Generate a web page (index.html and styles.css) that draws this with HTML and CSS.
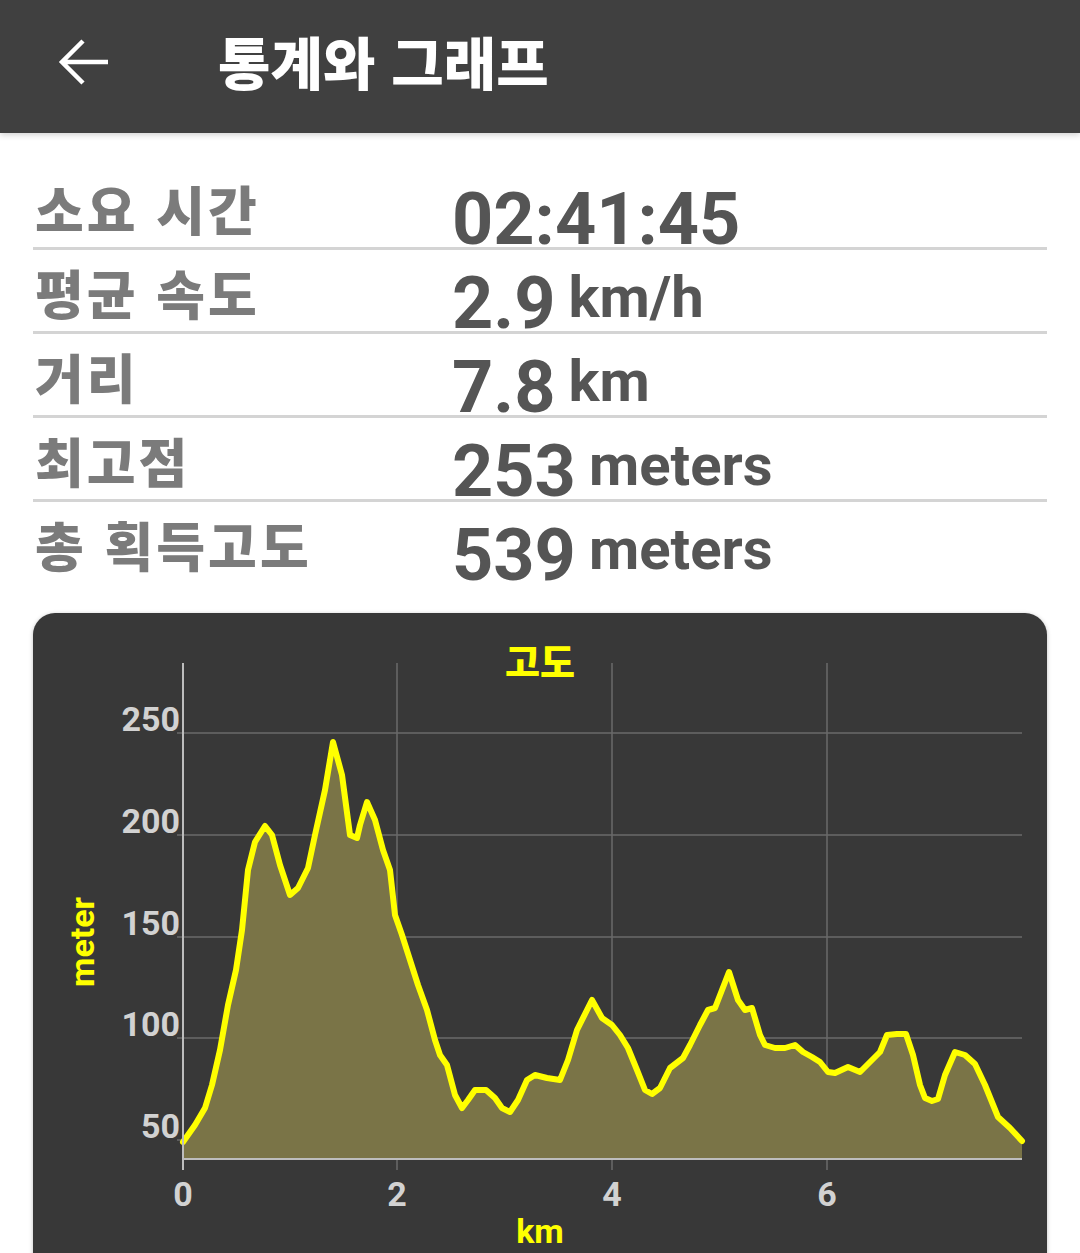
FILE: index.html
```html
<!DOCTYPE html>
<html lang="ko">
<head>
    <meta charset="UTF-8">
    <meta name="viewport" content="width=device-width, initial-scale=1.0">
    <title>통계와 그래프</title>
    <link rel="stylesheet" href="styles.css">
</head>
<body>
    <header class="toolbar">
        <svg class="back" width="72" height="72" viewBox="0 0 72 72">
            <path d="M60 36 H14 M35 15 L14 36 L35 57" fill="none" stroke="#fff" stroke-width="4.5" stroke-linecap="butt" stroke-linejoin="miter"/>
        </svg>
        <h1 class="title">통계와 그래프</h1>
    </header>

    <section class="stats">
        <div class="row">
            <div class="label">소요 시간</div>
            <div class="value"><span class="num">02:41:45</span></div>
        </div>
        <div class="row">
            <div class="label">평균 속도</div>
            <div class="value"><span class="num">2.9</span><span class="unit">km/h</span></div>
        </div>
        <div class="row">
            <div class="label">거리</div>
            <div class="value"><span class="num">7.8</span><span class="unit">km</span></div>
        </div>
        <div class="row">
            <div class="label">최고점</div>
            <div class="value"><span class="num">253</span><span class="unit">meters</span></div>
        </div>
        <div class="row last">
            <div class="label">총 획득고도</div>
            <div class="value"><span class="num">539</span><span class="unit">meters</span></div>
        </div>
    </section>

    <div class="chart-card">
        <!-- viewBox uses page coordinates so the numbers read like the screen -->
        <svg class="chart" width="1014" height="660" viewBox="33 613 1014 660">
            <text class="chart-title" x="540" y="676">고도</text>

            <g class="grid">
                <line x1="397" y1="663" x2="397" y2="1170"/>
                <line x1="612" y1="663" x2="612" y2="1170"/>
                <line x1="827" y1="663" x2="827" y2="1170"/>
                <line x1="177" y1="733" x2="1022" y2="733"/>
                <line x1="177" y1="835" x2="1022" y2="835"/>
                <line x1="177" y1="937" x2="1022" y2="937"/>
                <line x1="177" y1="1038" x2="1022" y2="1038"/>
                <line x1="177" y1="1140" x2="1022" y2="1140"/>
            </g>

            <path class="area" d="M183 1159 L183 1142 L195 1125 L205 1108 L212 1085 L220 1050 L228 1005 L236 970 L242 930 L248 870 L255 842 L265 826 L272 835 L280 865 L290 895 L298 888 L308 868 L315 835 L325 790 L333 742 L342 775 L350 835 L357 838 L360 825 L367 802 L375 820 L383 850 L390 870 L395 915 L402 935 L410 960 L418 985 L427 1010 L435 1040 L440 1055 L447 1065 L455 1095 L462 1108 L468 1100 L475 1090 L486 1090 L495 1098 L502 1108 L510 1112 L518 1100 L527 1080 L535 1075 L547 1078 L560 1080 L568 1060 L577 1030 L592 1000 L602 1018 L612 1025 L620 1035 L628 1048 L637 1070 L645 1090 L652 1094 L660 1088 L670 1068 L683 1058 L690 1045 L700 1025 L708 1010 L715 1008 L722 990 L729 972 L738 1000 L745 1010 L752 1008 L760 1035 L765 1045 L775 1048 L785 1048 L795 1045 L803 1052 L812 1057 L820 1062 L828 1072 L835 1073 L848 1067 L860 1072 L872 1060 L880 1052 L887 1035 L897 1034 L906 1034 L913 1055 L920 1085 L925 1098 L932 1101 L938 1099 L945 1075 L955 1052 L965 1055 L975 1064 L985 1085 L998 1117 L1010 1128 L1022 1141 L1022 1159 Z"/>
            <polyline class="trace" points="183,1142 195,1125 205,1108 212,1085 220,1050 228,1005 236,970 242,930 248,870 255,842 265,826 272,835 280,865 290,895 298,888 308,868 315,835 325,790 333,742 342,775 350,835 357,838 360,825 367,802 375,820 383,850 390,870 395,915 402,935 410,960 418,985 427,1010 435,1040 440,1055 447,1065 455,1095 462,1108 468,1100 475,1090 486,1090 495,1098 502,1108 510,1112 518,1100 527,1080 535,1075 547,1078 560,1080 568,1060 577,1030 592,1000 602,1018 612,1025 620,1035 628,1048 637,1070 645,1090 652,1094 660,1088 670,1068 683,1058 690,1045 700,1025 708,1010 715,1008 722,990 729,972 738,1000 745,1010 752,1008 760,1035 765,1045 775,1048 785,1048 795,1045 803,1052 812,1057 820,1062 828,1072 835,1073 848,1067 860,1072 872,1060 880,1052 887,1035 897,1034 906,1034 913,1055 920,1085 925,1098 932,1101 938,1099 945,1075 955,1052 965,1055 975,1064 985,1085 998,1117 1010,1128 1022,1141"/>

            <g class="axis">
                <line x1="183" y1="663" x2="183" y2="1170"/>
                <line x1="183" y1="1159" x2="1022" y2="1159"/>
            </g>

            <g class="ylabels">
                <text x="180" y="731">250</text>
                <text x="180" y="833">200</text>
                <text x="180" y="935">150</text>
                <text x="180" y="1036">100</text>
                <text x="180" y="1138">50</text>
            </g>
            <g class="xlabels">
                <text x="183" y="1206">0</text>
                <text x="397" y="1206">2</text>
                <text x="612" y="1206">4</text>
                <text x="827" y="1206">6</text>
            </g>

            <text class="axis-name" x="540" y="1243">km</text>
            <text class="axis-name" x="0" y="0" transform="translate(94 942) rotate(-90)">meter</text>
        </svg>
    </div>
</body>
</html>
```

FILE: styles.css
```css
body {
    margin: 0;
    background-color: #ffffff;
    font-family: "Noto Sans CJK KR", "Noto Sans", sans-serif;
    overflow: hidden;
}

.toolbar {
    display: flex;
    align-items: center;
    height: 133px;
    background-color: #404040;
    box-shadow: 0 2px 6px rgba(0, 0, 0, 0.18);
    position: relative;
}

.back {
    margin-left: 48px;
    margin-bottom: 10px;
    flex: none;
}

.title {
    margin: 0 0 14px 98px;
    color: #ffffff;
    font-size: 57px;
    font-weight: 900;
    letter-spacing: 0;
}

.stats {
    padding: 33px 33px 0;
}

.row {
    display: flex;
    align-items: flex-end;
    height: 81px;
    border-bottom: 3px solid #d4d4d4;
}

.row.last {
    border-bottom-color: transparent;
}

.label {
    width: 419px;
    flex: none;
    padding-left: 2px;
    padding-bottom: 12px;
    color: #7b7b7b;
    font-size: 53px;
    font-weight: 900;
    letter-spacing: 3px;
    line-height: 1;
    box-sizing: border-box;
}

.value {
    display: flex;
    align-items: flex-end;
    font-family: Roboto, "Liberation Sans", sans-serif;
    color: #555555;
    font-weight: 700;
}

.num {
    font-size: 72px;
    line-height: 0.75;
}

.unit {
    font-size: 58px;
    line-height: 1;
    margin-left: 13px;
    margin-bottom: 5px;
}

.chart-card {
    margin: 27px 33px 0;
    height: 660px;
    background-color: #383838;
    border-radius: 22px 22px 0 0;
    box-shadow: 0 1px 4px rgba(0, 0, 0, 0.25);
    overflow: hidden;
}

.chart {
    display: block;
}

.chart text {
    font-family: Roboto, "Liberation Sans", sans-serif;
}

.chart .chart-title {
    font-family: "Noto Sans CJK KR", sans-serif;
    font-size: 38px;
    font-weight: 900;
    fill: #ffff00;
    text-anchor: middle;
}

.grid line {
    stroke: #6a6a6a;
    stroke-width: 1.5;
}

.axis line {
    stroke: #bdbdbd;
    stroke-width: 2;
}

.area {
    fill: #7a7447;
}

.trace {
    fill: none;
    stroke: #ffff00;
    stroke-width: 6;
    stroke-linejoin: round;
    stroke-linecap: round;
}

.ylabels text {
    font-size: 34px;
    font-weight: 700;
    fill: #d2d2d2;
    text-anchor: end;
}

.xlabels text {
    font-size: 34px;
    font-weight: 700;
    fill: #d2d2d2;
    text-anchor: middle;
}

.chart .axis-name {
    font-size: 34px;
    font-weight: 700;
    fill: #ffff00;
    text-anchor: middle;
}
```
